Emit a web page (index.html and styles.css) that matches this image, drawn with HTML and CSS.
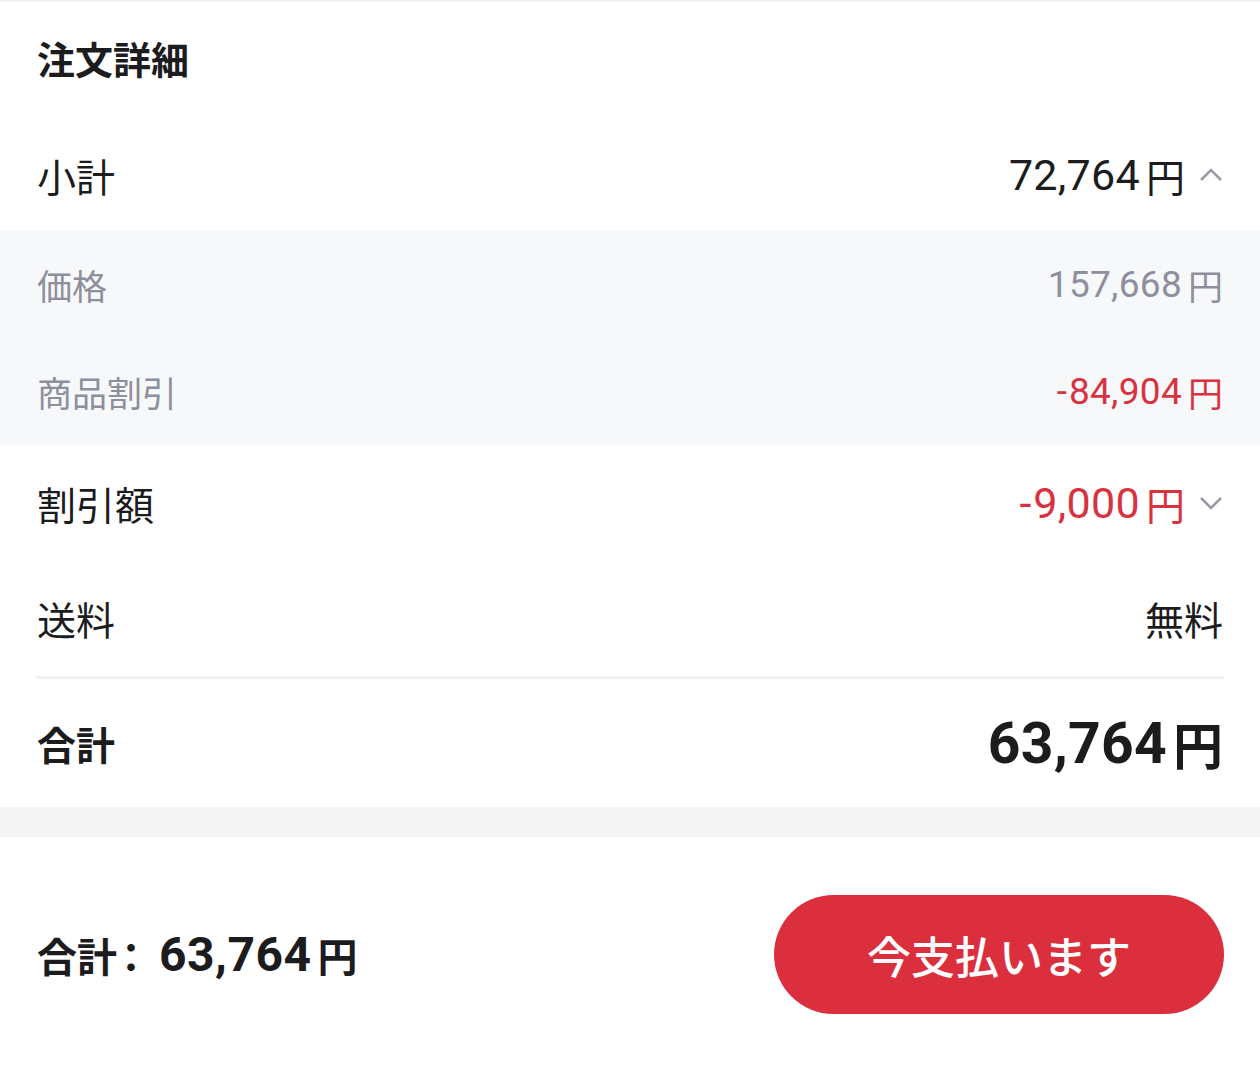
FILE: index.html
```html
<!DOCTYPE html>
<html lang="ja">
<head>
    <meta charset="UTF-8">
    <meta name="viewport" content="width=device-width, initial-scale=1.0">
    <title>注文詳細</title>
    <link rel="stylesheet" href="styles.css">
</head>
<body>
    <div class="page">
        <section class="card">
            <h2 class="card-title">注文詳細</h2>

            <div class="row">
                <span class="label">小計</span>
                <span class="value"><span class="num">72,764</span><span class="yen">円</span>
                    <svg class="chev" viewBox="0 0 24 14"><path d="M2 12 L12 2 L22 12"/></svg>
                </span>
            </div>

            <div class="sub">
                <div class="row sub-row">
                    <span class="label">価格</span>
                    <span class="value"><span class="num">157,668</span><span class="yen">円</span></span>
                </div>
                <div class="row sub-row">
                    <span class="label">商品割引</span>
                    <span class="value red"><span class="minus">-</span><span class="num">84,904</span><span class="yen">円</span></span>
                </div>
            </div>

            <div class="row row-discount">
                <span class="label">割引額</span>
                <span class="value red"><span class="minus">-</span><span class="num">9,000</span><span class="yen">円</span>
                    <svg class="chev" viewBox="0 0 24 14"><path d="M2 2 L12 12 L22 2"/></svg>
                </span>
            </div>

            <div class="row row-ship">
                <span class="label">送料</span>
                <span class="value">無料</span>
            </div>

            <div class="total">
                <span class="label">合計</span>
                <span class="value"><span class="num">63,764</span><span class="yen">円</span></span>
            </div>
        </section>

        <div class="gap"></div>

        <footer class="bar">
            <div class="bar-total"><span>合計</span><span class="colon">：</span><span class="num">63,764</span><span class="yen">円</span></div>
            <button class="pay">今支払います</button>
        </footer>
    </div>
</body>
</html>
```

FILE: styles.css
```css
body { margin: 0; background: #fff; font-family: Roboto, "Noto Sans CJK JP", sans-serif; color: #1c1c1e; }
.page { width: 1260px; border-top: 2px solid #f3f3f3; }
.card { background: #fff; }
.card-title { margin: 0; padding: 0 37px 6px; height: 110px; display: flex; align-items: center; font-size: 38px; font-weight: 700; }
.row { display: flex; justify-content: space-between; align-items: center; height: 113px; padding: 0 37px; font-size: 39px; }
.row-discount { height: 115px; }
.row-ship { height: 116px; }
.value { display: flex; align-items: center; }
.num { font-size: 43px; letter-spacing: 0.3px; }
.minus { font-size: 43px; padding: 0 2px 0 1px; }
.yen { margin-left: 6px; }
.chev { width: 24px; height: 14px; margin-left: 14px; fill: none; stroke: #9b9ba7; stroke-width: 2.6; }
.sub { background: #f7f8fa; }
.sub-row { height: 107px; color: #8e8f9c; font-size: 35px; }
.sub-row .num, .sub-row .minus { font-size: 37px; }
.red { color: #d8323f; }
.total { display: flex; justify-content: space-between; align-items: center; height: 128px; margin: 0 36px; padding: 0 1px; border-top: 3px solid #f2f2f2; }
.total .label { font-size: 39px; font-weight: 700; }
.total .value { font-size: 50px; font-weight: 700; }
.total .num { font-size: 57px; }
.gap { height: 30px; background: #f4f4f4; }
.bar { display: flex; justify-content: space-between; align-items: center; padding: 58px 36px 54px 37px; }
.bar-total { display: flex; align-items: center; font-size: 40px; font-weight: 700; }
.colon { font-feature-settings: "halt"; margin: 0 18px 0 4px; }
.bar-total .num { font-size: 48px; letter-spacing: 0.5px; }
.pay { width: 450px; height: 119px; border: none; border-radius: 60px; background: #dc2f3e; color: #fff; font-family: inherit; font-size: 44px; font-weight: 500; }
```
